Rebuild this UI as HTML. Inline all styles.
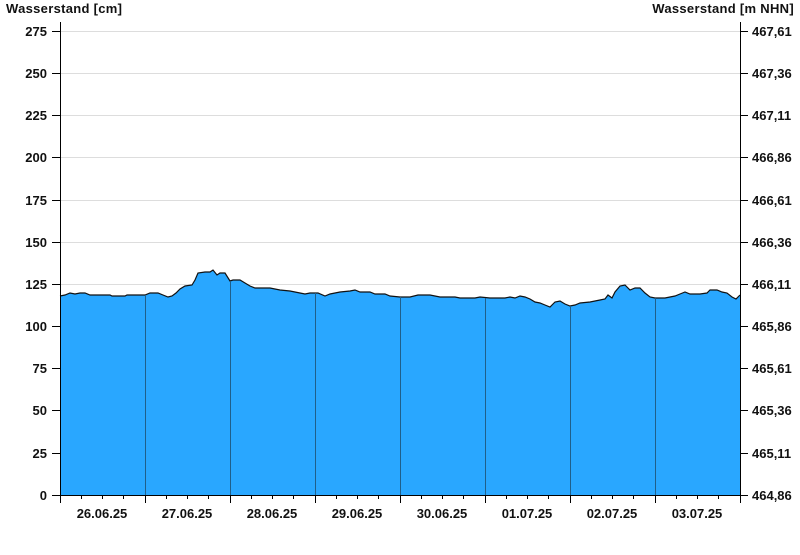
<!DOCTYPE html>
<html><head><style>
body{margin:0;background:#fff;width:800px;height:550px;overflow:hidden}
text{font-family:"Liberation Sans",Arial,sans-serif;font-size:13px;font-weight:bold;fill:#111}
.t{letter-spacing:0.3px}
</style></head><body>
<svg width="800" height="550" xmlns="http://www.w3.org/2000/svg">
<g stroke="#ddd" stroke-width="1">
<line x1="60" x2="740" y1="31.5" y2="31.5"/><line x1="60" x2="740" y1="73.5" y2="73.5"/><line x1="60" x2="740" y1="115.5" y2="115.5"/><line x1="60" x2="740" y1="157.5" y2="157.5"/><line x1="60" x2="740" y1="200.5" y2="200.5"/><line x1="60" x2="740" y1="242.5" y2="242.5"/><line x1="60" x2="740" y1="284.5" y2="284.5"/>
</g>
<path fill="#29a7ff" stroke="none" d="M60,296 L65,295 70,293 75,294 80,293 85,293 90,295 110,295 112,296 125,296 127,295 145,295 150,293 158,293 163,295 168,297 172,296 176,293 180,289 185,286 192,285 195,280 198,273 205,272 210,272 213,270 217,275 220,273 225,273 230,281 233,280 240,280 245,283 250,286 255,288 260,288 270,288 280,290 290,291 300,293 305,294 310,293 318,293 325,296 330,294 340,292 350,291 355,290 360,292 370,292 375,294 385,294 390,296 400,297 410,297 418,295 430,295 440,297 455,297 460,298 475,298 480,297 490,298 505,298 510,297 515,298 520,296 525,297 530,299 535,302 540,303 545,305 550,307 555,302 560,301 565,304 570,306 575,305 580,303 590,302 600,300 605,299 608,295 612,298 615,292 620,286 625,285 630,290 635,288 640,288 645,293 650,297 655,298 665,298 675,296 680,294 685,292 690,294 700,294 707,293 710,290 717,290 722,292 727,293 732,297 736,299 740,295 L740,495 L60,495 Z"/>
<path fill="none" stroke="#111" stroke-width="1.2" d="M60,296 L65,295 70,293 75,294 80,293 85,293 90,295 110,295 112,296 125,296 127,295 145,295 150,293 158,293 163,295 168,297 172,296 176,293 180,289 185,286 192,285 195,280 198,273 205,272 210,272 213,270 217,275 220,273 225,273 230,281 233,280 240,280 245,283 250,286 255,288 260,288 270,288 280,290 290,291 300,293 305,294 310,293 318,293 325,296 330,294 340,292 350,291 355,290 360,292 370,292 375,294 385,294 390,296 400,297 410,297 418,295 430,295 440,297 455,297 460,298 475,298 480,297 490,298 505,298 510,297 515,298 520,296 525,297 530,299 535,302 540,303 545,305 550,307 555,302 560,301 565,304 570,306 575,305 580,303 590,302 600,300 605,299 608,295 612,298 615,292 620,286 625,285 630,290 635,288 640,288 645,293 650,297 655,298 665,298 675,296 680,294 685,292 690,294 700,294 707,293 710,290 717,290 722,292 727,293 732,297 736,299 740,295"/>
<g stroke="#1f5f8a" stroke-width="1">
<line x1="145.5" x2="145.5" y1="295" y2="495"/><line x1="230.5" x2="230.5" y1="281" y2="495"/><line x1="315.5" x2="315.5" y1="293" y2="495"/><line x1="400.5" x2="400.5" y1="297" y2="495"/><line x1="485.5" x2="485.5" y1="298" y2="495"/><line x1="570.5" x2="570.5" y1="306" y2="495"/><line x1="655.5" x2="655.5" y1="298" y2="495"/>
</g>
<g stroke="#000" stroke-width="1">
<line x1="60.5" x2="60.5" y1="22" y2="503"/><line x1="740.5" x2="740.5" y1="22" y2="503"/><line x1="60" x2="741" y1="495.5" y2="495.5"/>
<path d="M52,31.5h8M52,73.5h8M52,115.5h8M52,157.5h8M52,200.5h8M52,242.5h8M52,284.5h8M52,326.5h8M52,368.5h8M52,410.5h8M52,453.5h8M52,495.5h8"/>
<path d="M740,31.5h8M740,73.5h8M740,115.5h8M740,157.5h8M740,200.5h8M740,242.5h8M740,284.5h8M740,326.5h8M740,368.5h8M740,410.5h8M740,453.5h8M740,495.5h8"/>
<path d="M145.5,495v8M230.5,495v8M315.5,495v8M400.5,495v8M485.5,495v8M570.5,495v8M655.5,495v8"/>
<path d="M81.5,495v4M102.5,495v4M123.5,495v4M166.5,495v4M187.5,495v4M208.5,495v4M251.5,495v4M272.5,495v4M293.5,495v4M336.5,495v4M357.5,495v4M378.5,495v4M421.5,495v4M442.5,495v4M463.5,495v4M506.5,495v4M527.5,495v4M548.5,495v4M591.5,495v4M612.5,495v4M633.5,495v4M676.5,495v4M697.5,495v4M718.5,495v4"/>
</g>
<text class="t" x="6" y="13">Wasserstand [cm]</text>
<text class="t" x="794" y="13" text-anchor="end">Wasserstand [m NHN]</text>
<g text-anchor="end">
<text x="47" y="36">275</text><text x="47" y="78">250</text><text x="47" y="120">225</text><text x="47" y="162">200</text><text x="47" y="205">175</text><text x="47" y="247">150</text><text x="47" y="289">125</text><text x="47" y="331">100</text><text x="47" y="373">75</text><text x="47" y="415">50</text><text x="47" y="458">25</text><text x="47" y="500">0</text>
</g>
<g>
<text x="752" y="36">467,61</text><text x="752" y="78">467,36</text><text x="752" y="120">467,11</text><text x="752" y="162">466,86</text><text x="752" y="205">466,61</text><text x="752" y="247">466,36</text><text x="752" y="289">466,11</text><text x="752" y="331">465,86</text><text x="752" y="373">465,61</text><text x="752" y="415">465,36</text><text x="752" y="458">465,11</text><text x="752" y="500">464,86</text>
</g>
<g text-anchor="middle">
<text x="102" y="518">26.06.25</text><text x="187" y="518">27.06.25</text><text x="272" y="518">28.06.25</text><text x="357" y="518">29.06.25</text><text x="442" y="518">30.06.25</text><text x="527" y="518">01.07.25</text><text x="612" y="518">02.07.25</text><text x="697" y="518">03.07.25</text>
</g>
</svg>
</body></html>
